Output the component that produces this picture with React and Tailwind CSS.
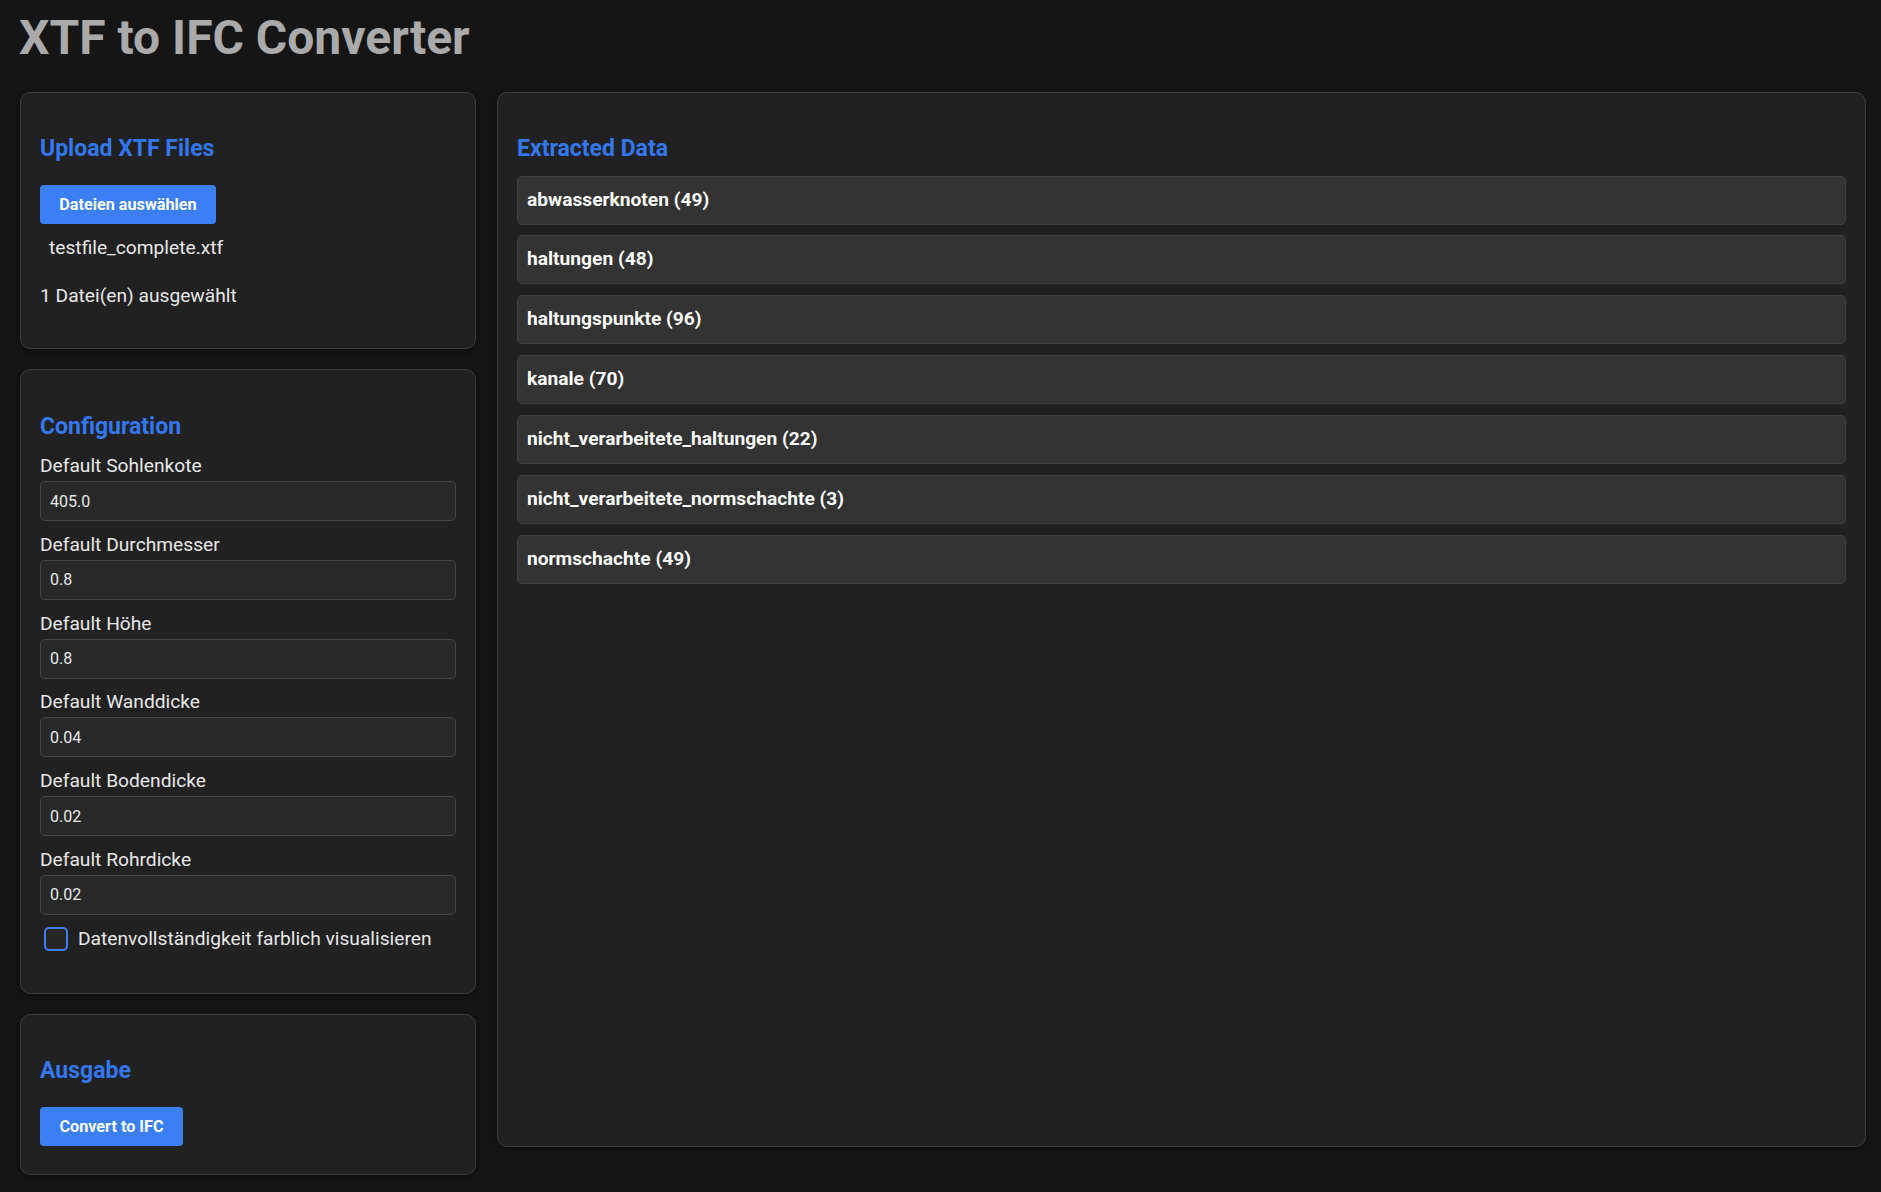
import React, { useState } from "react";

const fields = [
  { label: "Default Sohlenkote", value: "405.0" },
  { label: "Default Durchmesser", value: "0.8" },
  { label: "Default Höhe", value: "0.8" },
  { label: "Default Wanddicke", value: "0.04" },
  { label: "Default Bodendicke", value: "0.02" },
  { label: "Default Rohrdicke", value: "0.02" },
];

const extracted = [
  { name: "abwasserknoten", count: 49 },
  { name: "haltungen", count: 48 },
  { name: "haltungspunkte", count: 96 },
  { name: "kanale", count: 70 },
  { name: "nicht_verarbeitete_haltungen", count: 22 },
  { name: "nicht_verarbeitete_normschachte", count: 3 },
  { name: "normschachte", count: 49 },
];

const Card = ({ className = "", children }) => (
  <div
    className={
      "bg-[#212121] border border-[#3d3d3d] rounded-[10px] px-[19px] shadow-[0_2px_6px_rgba(0,0,0,0.4)] " +
      className
    }
  >
    {children}
  </div>
);

const Heading = ({ children, className = "" }) => (
  <h2
    className={
      "text-[23px] leading-[29px] font-bold text-[#3378f2] " + className
    }
  >
    {children}
  </h2>
);

const App = () => {
  const [values, setValues] = useState(fields.map((f) => f.value));
  const [colorize, setColorize] = useState(false);

  return (
    <div className="min-h-screen bg-[#151515] font-['Roboto',sans-serif] pl-5 pr-[15px] pt-[10px] pb-5">
      {/* title */}
      <h1 className="text-[48px] leading-[56px] font-bold text-[#aaaaaa] -ml-px">
        XTF to IFC Converter
      </h1>

      <div className="flex items-start gap-[21px] mt-[26px]">
        {/* left column */}
        <div className="w-[456px] flex flex-col gap-5 shrink-0">
          {/* upload */}
          <Card className="pt-[40.5px] h-[257px]">
            <Heading>Upload XTF Files</Heading>
            <button className="mt-[22.5px] h-[39px] w-[176px] bg-[#3b7ff6] rounded-[4px] pt-px text-white text-[16.2px] font-bold">
              Dateien auswählen
            </button>
            <p className="mt-[13px] pl-[9px] text-[19.2px] leading-[22.5px] text-[#e8e8e8]">
              testfile_complete.xtf
            </p>
            <p className="mt-[25px] text-[19.2px] leading-[22.5px] text-[#e8e8e8]">
              1 Datei(en) ausgewählt
            </p>
          </Card>

          {/* configuration */}
          <Card className="pt-[41.5px] h-[625px]">
            <Heading>Configuration</Heading>
            <div className="mt-[14.7px] flex flex-col">
              {fields.map((f, i) => (
                <div key={f.label} className="flex flex-col mb-[12.6px]">
                  <label className="text-[19.2px] leading-[22.5px] text-[#e8e8e8]">
                    {f.label}
                  </label>
                  <input
                    className="mt-[3.6px] h-[40px] w-full bg-[#282828] border border-[#444444] rounded-[5px] px-[9px] text-[16px] text-[#e8e8e8] outline-none"
                    value={values[i]}
                    onChange={(e) => {
                      const next = [...values];
                      next[i] = e.target.value;
                      setValues(next);
                    }}
                  />
                </div>
              ))}
            </div>
            <label className="flex items-center gap-[10px] pl-[4px] cursor-pointer">
              <span
                onClick={() => setColorize(!colorize)}
                className={
                  "w-[24px] h-[24px] rounded-[5px] border-2 border-[#3b7ff6] " +
                  (colorize ? "bg-[#3b7ff6]" : "bg-[#262626]")
                }
              />
              <span className="text-[19.2px] leading-[22.5px] text-[#e8e8e8]">
                Datenvollständigkeit farblich visualisieren
              </span>
            </label>
          </Card>

          {/* output */}
          <Card className="pt-[41px] h-[161px]">
            <Heading>Ausgabe</Heading>
            <button className="mt-[22px] h-[39px] w-[143px] bg-[#3b7ff6] rounded-[4px] pt-px text-white text-[16.2px] font-bold">
              Convert to IFC
            </button>
          </Card>
        </div>

        {/* right column */}
        <Card className="flex-1 h-[1055px] pt-[40.5px]">
          <Heading>Extracted Data</Heading>
          <div className="mt-[13px] flex flex-col gap-[10.9px]">
            {extracted.map((item) => (
              <div
                key={item.name}
                className="h-[49px] flex items-center bg-[#333333] border border-[#3f3f3f] rounded-[5px] px-[9px] text-[19.2px] font-bold text-white"
              >
                {item.name} ({item.count})
              </div>
            ))}
          </div>
        </Card>
      </div>
    </div>
  );
};

export default App;
